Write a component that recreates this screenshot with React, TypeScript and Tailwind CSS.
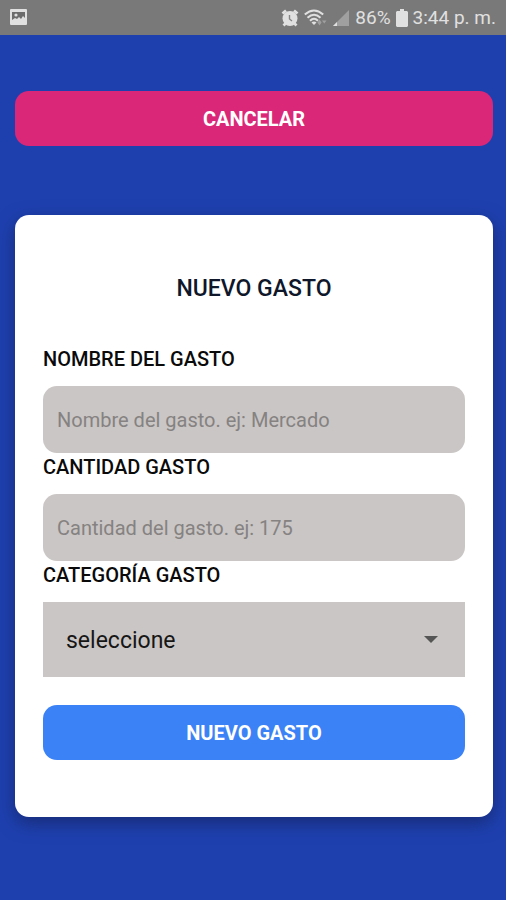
import { useState } from "react";

const inputClass =
    "mt-[13px] block h-[67px] w-full rounded-[14px] bg-[#cac6c5] px-[14px] text-[20px] text-black outline-none placeholder:text-[#858281]";
const labelClass = "block text-[20px] leading-7 font-medium text-[#0a0a0a]";
const buttonClass = "h-[55px] w-full rounded-[14px] text-[20px] font-bold text-white";

function StatusBar() {
    return (
        <header className="flex h-[35px] items-center justify-between bg-[#797979] px-[10px] text-[19px] text-[#e0e0e0]">
            {/* Gallery notification */}
            <svg className="size-[18px]" viewBox="0 0 18 18" aria-hidden="true">
                <rect x="0" y="0" width="17" height="16" rx="1" fill="currentColor" />
                <path d="M2 3h13v6l-2-2-2 3-2-2-2 2-2-1-3 2z" fill="#6c6c6c" />
                <circle cx="6" cy="6" r="1.6" fill="currentColor" />
            </svg>
            <div className="flex items-center gap-[5px]">
                {/* Alarm */}
                <svg className="size-[18px]" viewBox="0 0 18 18" fill="none" aria-hidden="true">
                    <circle cx="9" cy="9.5" r="7.5" fill="currentColor" />
                    <path d="M1.5 4.5l3.5-3M16.5 4.5l-3.5-3M2.5 16.5l2.5-2.5M15.500 16.500l-2.500-2.500" stroke="currentColor" strokeWidth="2.8" />
                    <path d="M8.5 6v4l2.500 2" stroke="#858585" strokeWidth="1.4" />
                </svg>
                {/* Wi-Fi with traffic arrows */}
                <svg className="h-[18px] w-[23px]" viewBox="0 0 23 18" fill="none" aria-hidden="true">
                    <g stroke="currentColor" strokeWidth="2">
                        <path d="M.8 5.5Q10 -2.500 19.200 5.500" />
                        <path d="M3.500 8.700Q10 2.800 16.500 8.700" />
                        <path d="M6 11.800Q10 7.800 14 11.800" />
                    </g>
                    <path d="M7.500 13.500Q10 11.500 12.500 13.500L10 16z" fill="currentColor" />
                    <path d="M13.500 13.500l2-3 2 3-2 3zM18 11.500h4.500l-2.250 3z" fill="#a0a0a0" />
                </svg>
                {/* Cell signal */}
                <svg className="size-[18px]" viewBox="0 0 18 18" aria-hidden="true">
                    <path d="M17 1v16H1z" fill="#a0a0a0" />
                    <path d="M1 17l4-4v4z" fill="currentColor" />
                </svg>
                <span className="pt-[2px]">86%</span>
                <svg className="h-[18px] w-3" viewBox="0 0 12 18" fill="currentColor" aria-hidden="true">
                    <path d="M4 0h4v2h3l1 1v14l-1 1H1l-1-1V3l1-1h3z" />
                </svg>
                <span className="pt-[2px]">3:44 p. m.</span>
            </div>
        </header>
    );
}

export default function App() {
    const [nombre, setNombre] = useState("");
    const [cantidad, setCantidad] = useState("");

    return (
        <div className="min-h-screen bg-[#1e40af] font-['Roboto',sans-serif]">
            <StatusBar />
            <main className="pt-14 pr-[13px] pb-20 pl-[15px]">
                <button type="button" className={`${buttonClass} bg-[#db2777]`}>
                    CANCELAR
                </button>
                <form className="mt-[69px] rounded-[14px] bg-white px-7 pt-[58px] pb-[57px] shadow-[0_6px_18px_rgba(20,30,80,0.6)]">
                    <h1 className="text-center text-[23px] leading-8 font-medium text-[#0f172a]">NUEVO GASTO</h1>
                    <div className="mt-10">
                        <label htmlFor="nombre" className={labelClass}>NOMBRE DEL GASTO</label>
                        <input
                            id="nombre"
                            className={inputClass}
                            placeholder="Nombre del gasto. ej: Mercado"
                            value={nombre}
                            onChange={(e) => setNombre(e.target.value)}
                        />
                    </div>
                    <div>
                        <label htmlFor="cantidad" className={labelClass}>CANTIDAD GASTO</label>
                        <input
                            id="cantidad"
                            inputMode="numeric"
                            className={inputClass}
                            placeholder="Cantidad del gasto. ej: 175"
                            value={cantidad}
                            onChange={(e) => setCantidad(e.target.value)}
                        />
                    </div>
                    <div>
                        <label htmlFor="categoria" className={labelClass}>CATEGORÍA GASTO</label>
                        <div className="relative mt-[13px]">
                            <select
                                id="categoria"
                                className="block h-[75px] w-full appearance-none bg-[#cac6c5] px-[23px] pt-1 text-[23px] text-[#161616]"
                            >
                                <option>seleccione</option>
                            </select>
                            <svg className="pointer-events-none absolute top-[34px] right-[27px] h-[7px] w-[14px]" viewBox="0 0 14 7" aria-hidden="true">
                                <path d="M0 0h14L7 7z" fill="#555" />
                            </svg>
                        </div>
                    </div>
                    <button type="submit" className={`${buttonClass} mt-7 bg-[#3b82f6]`}>
                        NUEVO GASTO
                    </button>
                </form>
            </main>
        </div>
    );
}
